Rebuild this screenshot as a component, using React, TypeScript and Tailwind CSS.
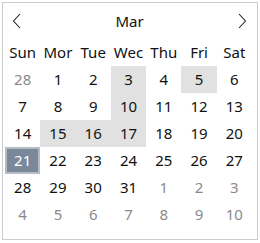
const WEEKDAYS = ["Sun", "Mor", "Tue", "Wec", "Thu", "Fri", "Sat"];

type Day = { n: number; muted?: boolean; shaded?: boolean; selected?: boolean };

const SHADED = new Set([3, 5, 10, 15, 16, 17]);

function buildDays(): Day[] {
  const days: Day[] = [{ n: 28, muted: true }];
  for (let i = 1; i <= 31; i++) {
    days.push({ n: i, shaded: SHADED.has(i), selected: i === 21 });
  }
  for (let i = 1; i <= 10; i++) days.push({ n: i, muted: true });
  return days;
}

function Chevron({ dir }: { dir: "left" | "right" }) {
  return (
    <svg width="10" height="16" viewBox="0 0 10 16" fill="none">
      <polyline
        points={dir === "left" ? "8,1 1.5,8 8,15" : "2,1 8.5,8 2,15"}
        stroke="#222"
        strokeWidth="1.1"
      />
    </svg>
  );
}

export default function App() {
  const days = buildDays();

  return (
    <div className="bg-white w-[260px] h-[243px] pl-[2px] pt-[2px]" style={{ fontFamily: '"Segoe UI", "Noto Sans", sans-serif' }}>
      <div className="w-[256px] h-[238px] border border-[#cccccc] bg-white text-[15px] text-[#111]">
        <div className="flex h-[36px] items-center justify-between pl-[9px] pr-[10px]">
          <Chevron dir="left" />
          <span className="leading-none">Mar</span>
          <Chevron dir="right" />
        </div>

        <div className="pl-[2px]">
          <div className="grid w-[247px] grid-cols-7">
            {WEEKDAYS.map((d) => (
              <div key={d} className="flex h-[27px] items-center justify-center">
                {d}
              </div>
            ))}
          </div>

          <div className="grid w-[247px] grid-cols-7">
            {days.map((d, i) => (
              <div
                key={i}
                className={
                  "flex h-[27px] items-center justify-center " +
                  (d.selected
                    ? "bg-[#7a8899] text-white border-2 border-[#b4bcc6]"
                    : d.shaded
                      ? "bg-[#e1e1e1]"
                      : "") +
                  (d.muted ? " text-[#8a8a8a]" : "")
                }
              >
                {d.n}
              </div>
            ))}
          </div>
        </div>
      </div>
    </div>
  );
}
